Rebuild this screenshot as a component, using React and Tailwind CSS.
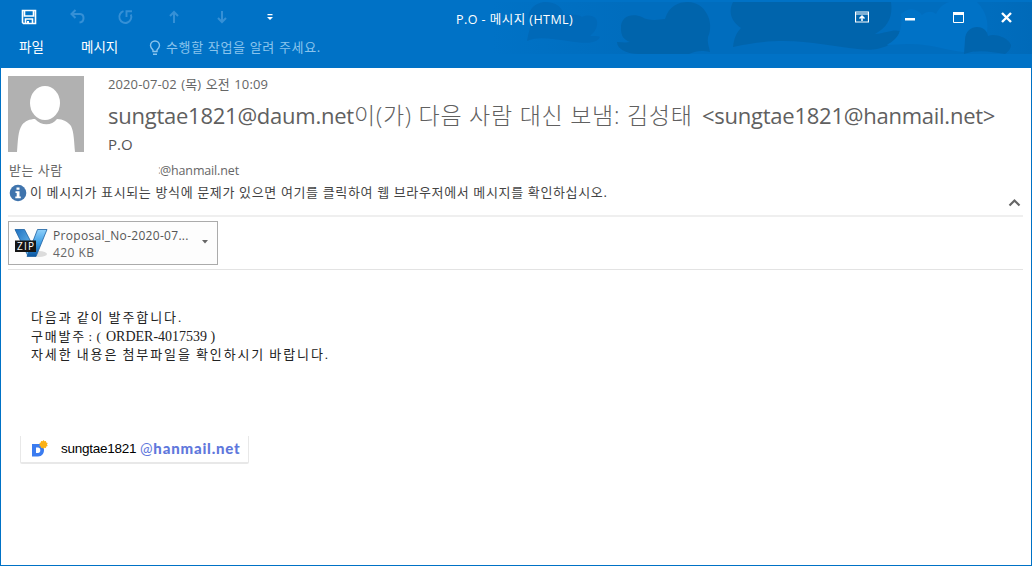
import React from "react";

const ui = "font-['Open_Sans','Noto_Sans_CJK_KR',sans-serif]";

const App = () => {
  return (
    <div
      className={`flex flex-col w-[1032px] h-[566px] overflow-hidden bg-white whitespace-nowrap ${ui}`}
    >
      <TitleBar />
      <main className="flex flex-col flex-1 border-x border-b border-[#0072c6] pl-[7px] pr-2">
        <MessageHeader />
        <Attachments />
        <MessageBody />
        <Signature />
      </main>
    </div>
  );
};

const TitleBar = () => (
  <header className="relative h-[68px] shrink-0 bg-[#0072c6] text-white">
    <Clouds />
    <div className="relative flex items-center h-[34px]">
      {/* Quick access toolbar */}
      <div className="flex items-center w-[456px] pl-[21px]">
        <SaveIcon />
        <svg className="ml-[32px] text-[#3590d6]" width="18" height="16" viewBox="0 0 18 16" fill="none" stroke="currentColor" strokeWidth="2">
          <path d="M6.500 1 2.500 5l4 4M2.500 5H11a4 4 0 0 1 3.500 4.200c0 2.500-1.500 4-4 4.300" />
        </svg>
        <svg className="ml-[30px] text-[#3590d6]" width="18" height="16" viewBox="0 0 18 16" fill="none" stroke="currentColor" strokeWidth="1.900">
          <path d="M6.500 2.200a6 6 0 1 0 7.300 3.300M9.500 8V2.200H15" />
        </svg>
        <svg className="ml-[31px] text-[#3590d6]" width="16" height="16" viewBox="0 0 16 16" fill="none" stroke="currentColor" strokeWidth="2">
          <path d="M8 14V3M4 7l4-4 4 4" />
        </svg>
        <svg className="ml-8 text-[#3590d6]" width="16" height="16" viewBox="0 0 16 16" fill="none" stroke="currentColor" strokeWidth="2">
          <path d="M8 2v11M4 9l4 4 4-4" />
        </svg>
        <svg className="ml-[36px]" width="8" height="8" viewBox="0 0 8 8" fill="currentColor">
          <path d="M1.500 1h5v1.300h-5zM1 4h6L4 7z" />
        </svg>
      </div>
      <h1 className="text-[12.500px] pt-[6px] tracking-[0.45px]">P.O - 메시지 (HTML)</h1>

      {/* Window buttons */}
      <div className="flex items-center ml-auto pr-5">
        <svg width="14" height="12" viewBox="0 0 14 12" fill="none" stroke="currentColor">
          <path d="M.5 1h13v10H.5zM1 3h12" strokeWidth="1.200" />
          <path d="M7 10V5M4.500 7.500 7 5l2.500 2.500" strokeWidth="1.500" />
        </svg>
        <svg className="ml-[36px]" width="10" height="12" viewBox="0 0 10 12" fill="currentColor">
          <path d="M0 7h10v2.500H0z" />
        </svg>
        <svg className="ml-[38px]" width="11" height="11" viewBox="0 0 11 11" fill="none" stroke="currentColor">
          <path d="M.5.5h10v10H.5z" />
          <path d="M0 1.500h11" strokeWidth="3" />
        </svg>
        <svg className="ml-[37px]" width="11" height="11" viewBox="0 0 11 11" fill="none" stroke="currentColor" strokeWidth="2.400">
          <path d="m1 1 9 9M10 1l-9 9" />
        </svg>
      </div>
    </div>

    {/* Ribbon tabs */}
    <nav className="relative flex items-center h-[26px] pt-px text-[13.500px]">
      <span className="ml-[19px] w-[62px]">파일</span>
      <span className="w-[68px]">메시지</span>
      <svg className="text-[#8ac4ed]" width="12" height="16" viewBox="0 0 12 16" fill="none" stroke="currentColor" strokeWidth="1.400">
        <path d="M4 11.500V10C2.500 8.500 1.500 7.500 1.500 5.500a4.500 4.500 0 0 1 9 0c0 2-1 3-2.500 4.500v1.500zM4 14.300h4" />
      </svg>
      <span className="ml-[5px] text-[13px] text-[#8ac4ed] tracking-[0.65px]">수행할 작업을 알려 주세요.</span>
    </nav>
  </header>
);

// Decorative cloud theme behind the window buttons
const Clouds = () => (
  <svg className="absolute top-0 right-0" width="540" height="56" viewBox="492 0 540 56">
    <defs>
      <linearGradient id="shade" x1="0" x2="1">
        <stop offset="0" stopColor="#006dbe" stopOpacity="0" />
        <stop offset=".25" stopColor="#006dbe" />
        <stop offset=".92" stopColor="#006dbe" />
        <stop offset="1" stopColor="#006ab9" />
      </linearGradient>
    </defs>
    <path fill="url(#shade)" d="M492 2h540v52H492z" />
    <path fill="#0069b8" d="M531 25C524 13 533 3 545 2c11 0 17 5 19 13 8 0 14-1 18 2 9-4 17 1 15 8-1 6-4 8-7 11 5 0 9 0 10 1-4 8-18 6-32 4-15-2-30-5-41 0 1-6 2-10 4-16z" />
    <path fill="#0064ac" d="M621 29c-1-13 11-16 21-12 6 4 15 3 23 2C669 6 678 2 688 2c17 0 27 20 20 35-1 5 1 10 2 15-9-2-14-1-21 2h-50c-14 0-22-6-22-12 4 0 8 1 13 0-6-2-9-6-9-13z" />
    <path fill="#0064ac" d="M733 2h158c2 15-3 25-16 32 11-1 18-5 25-3-4 16-25 21-42 18-36-3-68-15-125-2 1-8 3-14 8-19-10-7-13-16-8-26z" />
    <path fill="#0072c6" d="M901 14c7-7 16-6 21 1 5-4 10-4 14-1 3-6 7-10 13-12h28c9 9 13 22 9 35l-12 15c-19 2-37-8-66-8l-21 1c10-6 16-12 14-31z" />
    <path fill="#0064ad" d="M965 40c0-16 21-17 23-4 8-3 20 2 23 9 0 4-3 7-6 9-14-2-26-5-41 0z" />
  </svg>
);

const SaveIcon = () => (
  <svg width="16" height="16" viewBox="0 0 16 16" fill="none" stroke="currentColor" strokeWidth="1.600">
    <path d="M1.500 1.500h13v13h-12l-1-1zM3.500 2v5h9V2M4.500 14v-4h7v4" />
    <path d="M7 12v3" strokeWidth="2" />
  </svg>
);

const MessageHeader = () => (
  <section className="h-[147px] pt-2 text-[#666]">
    <div className="flex">
      <svg width="76" height="76" viewBox="0 0 76 76">
        <path fill="#b1b1b1" d="M0 0h76v76H0z" />
        <ellipse cx="37" cy="27" rx="15" ry="17" fill="#fff" />
        <path fill="#fff" d="M9 76c1-12 1-21 5-27 3-4 8-6 13-6 6 7 17 7 22 0 6 0 11 3 14 7 3 6 3 15 4 26z" />
      </svg>
      <div className="ml-6">
        <div className="h-4 leading-4 text-[13px] tracking-[0.1px] [word-spacing:1px]">2020-07-02 (목) 오전 10:09</div>
        <h2 className="flex items-center h-[45px] pt-px text-[22px] font-normal text-[#606060]">
          <span className="w-[246px] tracking-[-0.25px]">sungtae1821@daum.net</span>
          <span className="w-[348px] text-[23px] font-light tracking-[0.75px]">이(가) 다음 사람 대신 보냄: 김성태</span>
          <span className="tracking-[-0.25px]">&lt;sungtae1821@hanmail.net&gt;</span>
        </h2>
        <div className="h-[15px] leading-[15px] text-[15px] text-[#555]">P.O</div>
      </div>
    </div>
    <div className="flex items-center h-5 mt-2 pt-px text-[12.500px]">
      <span className="w-[149px] ml-px text-[13px] tracking-[0.5px]">받는 사람</span>
      <span className="w-[2px] overflow-hidden text-[#aaa]">:</span>
      <span className="pt-px tracking-[-0.15px]">@hanmail.net</span>
    </div>
    <div className="flex items-center h-[26px] text-[13px] text-[#444]">
      <svg className="ml-px" width="18" height="18" viewBox="0 0 18 18">
        <circle cx="9" cy="9" r="8.300" fill="#3f74ad" />
        <path fill="#fff" d="M7.500 3.500h3v2.300h-3zM6.500 7.300h4v5.200h1.300v1.700H6.300v-1.700h1.400V9H6.500z" />
      </svg>
      <span className="ml-[3px] tracking-[0.640px]">
        이 메시지가 표시되는 방식에 문제가 있으면 여기를 클릭하여 웹 브라우저에서 메시지를 확인하십시오.
      </span>
      <svg className="ml-auto mt-[19px] mr-[2px]" width="13" height="9" viewBox="0 0 13 9" fill="none" stroke="#666" strokeWidth="2.200">
        <path d="m1.500 7.500 5-5 5 5" />
      </svg>
    </div>
  </section>
);

const Attachments = () => (
  <section className="h-[55px] pt-[4px] border-t-2 border-b border-t-[#efefef] border-b-[#e3e3e3]">
    <div className="flex items-center w-[210px] h-[44px] pl-[5px] border border-[#ababab] bg-[#fdfdfd] text-[#666]">
      <ZipIcon />
      <div className="ml-[5px] w-[149px] pt-px text-[12px] leading-[17px]">
        <div className="tracking-[0.3px] text-[#555]">Proposal_No-2020-07...</div>
        <div className="tracking-[0.45px]">420 KB</div>
      </div>
      <svg className="mt-[-2px]" width="6" height="4" viewBox="0 0 6 4" fill="#666">
        <path d="M0 0h6L3 3.500z" />
      </svg>
    </div>
  </section>
);

const ZipIcon = () => (
  <svg width="34" height="32" viewBox="0 0 34 32">
    <defs>
      <linearGradient id="arm" x1="0" x2="1" y1="0" y2="1">
        <stop offset="0" stopColor="#1b6fc0" />
        <stop offset="1" stopColor="#7cc8f5" />
      </linearGradient>
      <linearGradient id="stem" x1="0" x2="0" y1="0" y2="1">
        <stop offset="0" stopColor="#8fd0fa" />
        <stop offset=".5" stopColor="#3f9fe6" />
        <stop offset="1" stopColor="#0b56a0" />
      </linearGradient>
    </defs>
    <ellipse cx="25" cy="27" rx="8" ry="3" fill="#dcdcdc" />
    <path fill="url(#arm)" stroke="#1c5f9f" strokeWidth=".8" d="M1 2.500h9.500L18 17l-4 12z" />
    <path fill="url(#stem)" stroke="#1c5f9f" strokeWidth=".8" d="M23.500 2.500h9.500L22 29.500h-9z" />
    <path fill="#151515" d="M1 13.500h21v11.500H1z" />
    <text x="3" y="22.800" fill="#fff" fontSize="10" textLength="17" className="font-['Open_Sans',sans-serif]">ZIP</text>
  </svg>
);

const MessageBody = () => (
  <section className="h-[166px] pt-[39px] pl-[23px] text-[13px] leading-[18.300px] text-[#222] font-['Liberation_Serif','Noto_Sans_CJK_KR',serif]">
    <p className="tracking-[1.900px] [word-spacing:-1px]">다음과 같이 발주합니다.</p>
    <p className="flex pt-px -mb-px">
      <span className="w-[75px] tracking-[1.800px] [word-spacing:-2.500px]">구매발주 : (</span>
      <span className="text-[14px]">ORDER-4017539 )</span>
    </p>
    <p className="tracking-[1.900px] [word-spacing:-1px]">자세한 내용은 첨부파일을 확인하시기 바랍니다.</p>
  </section>
);

const Signature = () => (
  <section className="flex items-center w-[229px] h-[28px] ml-[12px] pl-[10px] border-x border-b-2 border-[#e8e8e8] rounded-b-[2px]">
    <svg width="18" height="18" viewBox="0 0 18 18">
      <path fill="#3b7cf0" fillRule="evenodd" d="M1 4h6c4 0 6 2.500 6 6s-2 6.500-6 6.500H1zm4 3.500v5.500h2c1.500 0 2.300-1 2.300-2.800S8.500 7.500 7 7.500z" />
      <path fill="#fbb117" d="m12.500 0 1 1.200L15 1l.2 1.500 1.500.6-.7 1.400.7 1.400-1.500.6L15 8l-1.500-.2-1 1.200-1-1.200L10 8l-.2-1.500-1.500-.6L9 4.500l-.7-1.400 1.500-.6L10 1l1.500.2z" />
    </svg>
    <span className="w-[79px] ml-[12px] text-[13.500px] tracking-[-0.25px] text-black font-['Liberation_Sans',sans-serif]">sungtae1821</span>
    <span className="pb-[2px] text-[15px] text-[#5f78dc] font-['Lato',sans-serif] tracking-[0.8px]">
      @<b className="font-black">hanmail.net</b>
    </span>
  </section>
);

export default App;
